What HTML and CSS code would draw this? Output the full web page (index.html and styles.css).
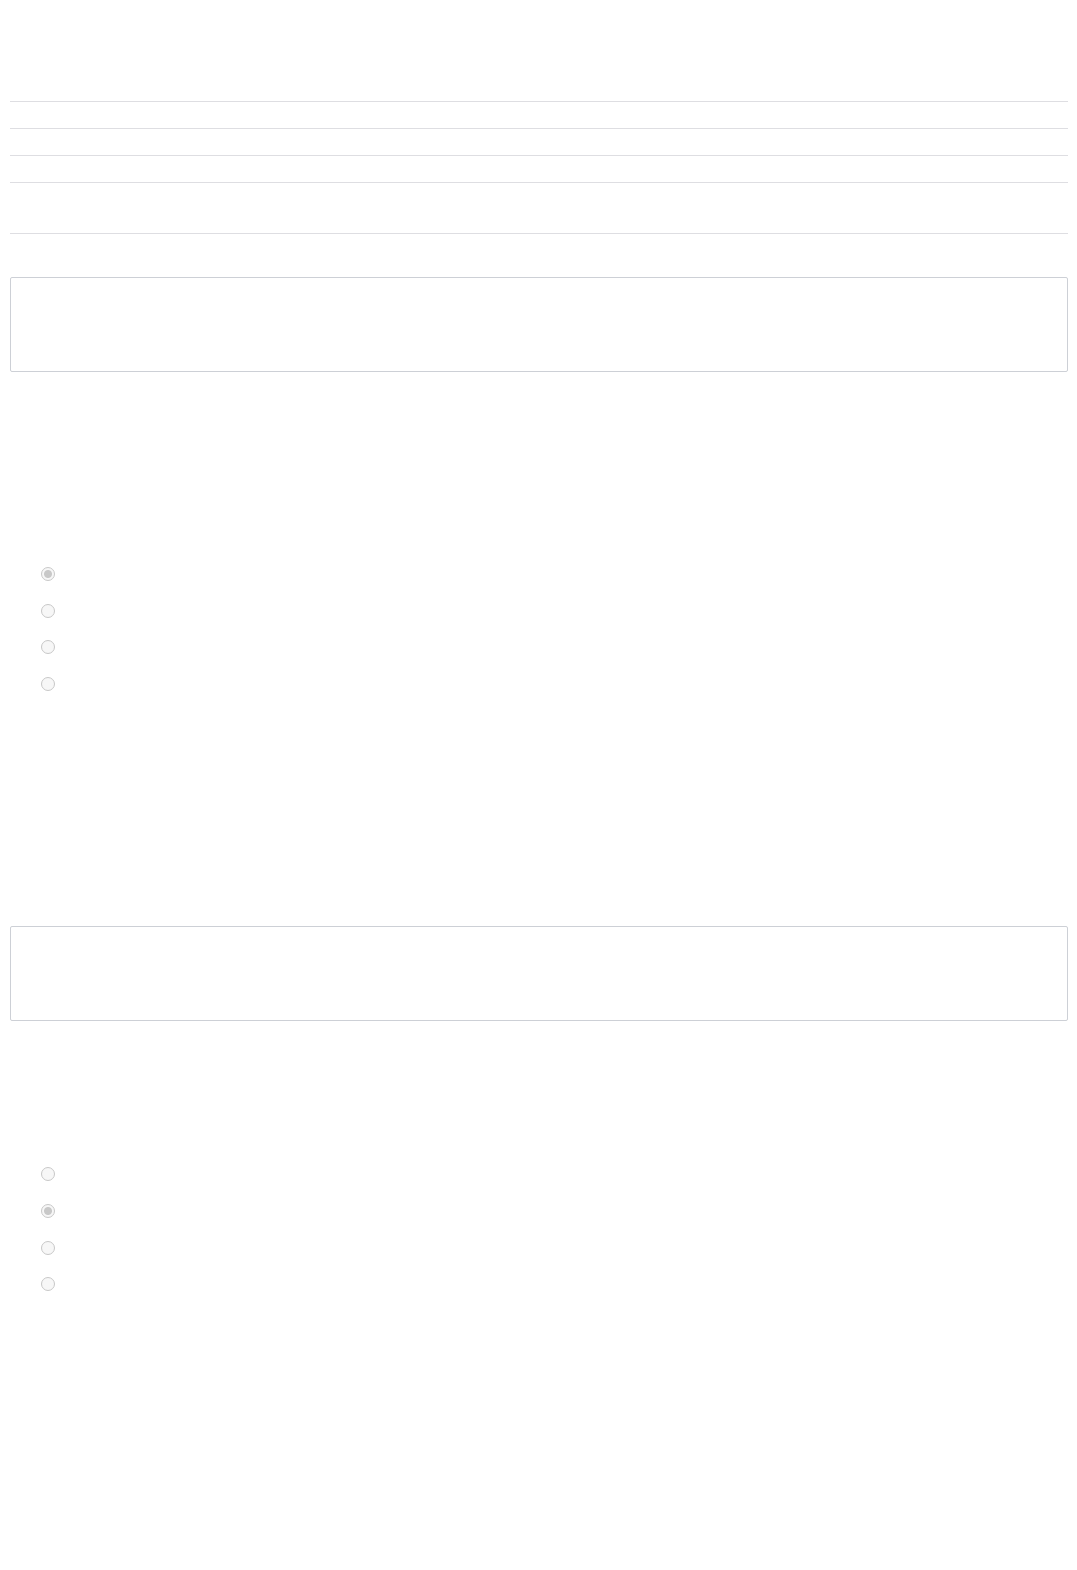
FILE: index.html
```html
<!DOCTYPE html>
<html lang="en">
<head>
  <meta charset="UTF-8" />
  <meta name="viewport" content="width=device-width, initial-scale=1" />
  <title>Form</title>
  <link rel="stylesheet" href="styles.css">
</head>
<body>
  <div class="container">
    <div class="rows">
      <div class="row"></div>
      <div class="row"></div>
      <div class="row"></div>
      <div class="row tall"></div>
      <div class="row end"></div>
    </div>

    <div class="box first"></div>

    <div class="options first-options">
      <label class="option"><input type="radio" name="q1" checked disabled /></label>
      <label class="option"><input type="radio" name="q1" disabled /></label>
      <label class="option"><input type="radio" name="q1" disabled /></label>
      <label class="option"><input type="radio" name="q1" disabled /></label>
    </div>

    <div class="box second"></div>

    <div class="options second-options">
      <label class="option"><input type="radio" name="q2" disabled /></label>
      <label class="option"><input type="radio" name="q2" checked disabled /></label>
      <label class="option"><input type="radio" name="q2" disabled /></label>
      <label class="option"><input type="radio" name="q2" disabled /></label>
    </div>
  </div>
</body>
</html>
```

FILE: styles.css
```css
body {
  font-family: 'Liberation Sans', Arial, sans-serif;
  background: #fff;
  margin: 0;
}

.container {
  padding: 101px 9px 200px 10px;
}

.row {
  border-top: 1px solid #dedee2;
  height: 26px;
}

.row.tall {
  height: 50px;
}

.row.end {
  height: 0;
}

.box {
  box-sizing: border-box;
  height: 95px;
  border: 1px solid #cdd0d6;
  border-radius: 2px;
}

.box.first {
  margin-top: 43px;
}

.box.second {
  margin-top: 213px;
}

.options {
  display: flex;
  flex-direction: column;
  padding-left: 26px;
}

.first-options {
  margin-top: 195px;
}

.second-options {
  margin-top: 146px;
}

.option {
  display: block;
  height: 36.6px;
}

.option input {
  appearance: none;
  box-sizing: border-box;
  margin: 0 0 0 5px;
  width: 14px;
  height: 14px;
  border: 1px solid #c8c8c8;
  border-radius: 50%;
  background: #f7f7f7;
}

.option input:checked {
  background: radial-gradient(circle, #c8c8c8 0, #c8c8c8 3.5px, #f7f7f7 4.5px);
}
```
